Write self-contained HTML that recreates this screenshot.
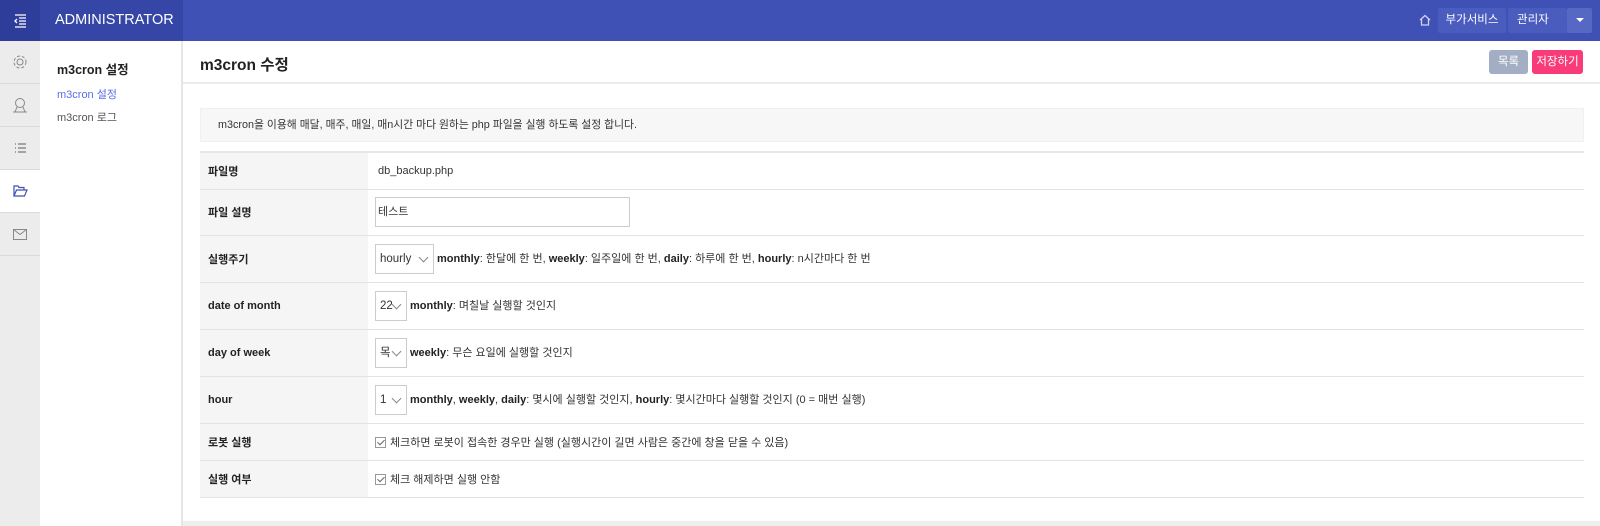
<!DOCTYPE html>
<html><head><meta charset="utf-8"><style>
*{box-sizing:border-box;margin:0;padding:0}
body{width:1600px;height:526px;overflow:hidden;background:#fff;font-family:"Liberation Sans","Noto Sans CJK KR",sans-serif;font-size:12px;color:#333;position:relative}
.top{position:absolute;left:0;top:0;width:1600px;height:41px;background:#3f51b5}
.tog{position:absolute;left:0;top:0;width:40px;height:41px;background:#2f3d9a}
.brand{position:absolute;left:40px;top:0;width:143px;height:41px;background:#3546a6;color:#fff;font-size:14.5px;line-height:41px;padding-left:15px}
.hb{position:absolute;top:8px;height:25px;background:#4a5cbe;color:#fff;font-size:11.5px;line-height:25px;text-align:center;border-radius:2px}
.side{position:absolute;left:0;top:41px;width:40px;height:485px;background:#ececec}
.si{position:absolute;left:0;width:40px;height:43px;border-bottom:1px solid #dadada}
.sub{position:absolute;left:40px;top:41px;width:143px;height:485px;border-right:2px solid #e6e6e6}
.main{position:absolute;left:183px;top:41px;right:0;height:485px}
table{border-collapse:collapse;position:absolute;left:17px;top:110px;width:1384px;border-top:2px solid #e6e6e6}
td{border-bottom:1px solid #e3e3e3;font-size:11px;vertical-align:middle}
td.l{background:#f5f5f5;width:168px;padding-left:8px;font-weight:bold;color:#222}
td.v{padding-left:7px}
.sel{display:inline-block;vertical-align:middle;border:1px solid #ccc;height:30px;line-height:28px;padding-left:4px;position:relative;margin-right:3px;background:#fff;font-size:11.5px}
.sel:after{content:"";position:absolute;right:6px;top:9px;width:6px;height:6px;border-right:1px solid #888;border-bottom:1px solid #888;transform:rotate(45deg)}
.cb{display:inline-block;width:11px;height:11px;border:1px solid #999;vertical-align:-2px;margin-right:4px;position:relative}
.cb:after{content:"";position:absolute;left:3px;top:0;width:3px;height:6px;border-right:1px solid #666;border-bottom:1px solid #666;transform:rotate(45deg)}
b{color:#222}
</style></head><body>
<div class="top"></div>
<div class="tog"><svg width="40" height="41" viewBox="0 0 40 41"><g stroke="#fff" stroke-width="1.3" fill="none"><path d="M15 15h11M19 18h7M19 21h7M19 24h7M15 27h11"/><path d="M17 19l-2 2 2 2"/></g></svg></div>
<div class="brand">ADMINISTRATOR</div>
<svg style="position:absolute;left:1418px;top:13px" width="14" height="14" viewBox="0 0 14 14"><path d="M2 7L7 2.5 12 7M3.5 6v6h7V6" fill="none" stroke="#cfd4f0" stroke-width="1.3"/></svg>
<div class="hb" style="left:1438px;width:68px">부가서비스</div>
<div class="hb" style="left:1508px;width:59px;text-align:left;padding-left:9px">관리자</div>
<div class="hb" style="left:1567px;width:25px;background:#5767c4"><span style="display:inline-block;border-left:4px solid transparent;border-right:4px solid transparent;border-top:4px solid #fff;vertical-align:middle"></span></div>
<div class="side">
<div class="si" style="top:0"><svg width="40" height="43"><circle cx="20" cy="21" r="3" fill="none" stroke="#888"/><circle cx="20" cy="21" r="6" fill="none" stroke="#888" stroke-dasharray="3 2"/></svg></div>
<div class="si" style="top:43px"><svg width="40" height="43"><circle cx="20" cy="19" r="4.5" fill="none" stroke="#888"/><path d="M13 28h14M17 23l-2 5M23 23l2 5" stroke="#888" fill="none"/></svg></div>
<div class="si" style="top:86px"><svg width="40" height="43"><g stroke="#777" stroke-width="1.2"><path d="M15 17h1M15 21h1M15 25h1M18 17h8M18 21h8M18 25h8"/></g></svg></div>
<div class="si" style="top:129px;background:#fff"><svg width="40" height="43"><path d="M14 26V16h4l1 1.5h5V20M14 26l2.5-6H27l-2.5 6z" fill="none" stroke="#3f51b5" stroke-width="1.2"/></svg></div>
<div class="si" style="top:172px"><svg width="40" height="43"><rect x="13.5" y="16.5" width="13" height="10" fill="none" stroke="#888"/><path d="M13.5 16.5l6.5 5 6.5-5" fill="none" stroke="#888"/></svg></div>
</div>
<div class="sub">
<div style="position:absolute;left:17px;top:18px;font-size:12.5px;font-weight:bold;color:#222">m3cron 설정</div>
<div style="position:absolute;left:17px;top:45px;color:#5a6ee6;font-size:11px">m3cron 설정</div>
<div style="position:absolute;left:17px;top:68px;color:#555;font-size:11px">m3cron 로그</div>
</div>
<div class="main">
<div style="position:absolute;left:17px;top:12px;font-size:15.5px;font-weight:bold;color:#222">m3cron 수정</div>
<div style="position:absolute;left:0;right:0;top:41px;border-top:2px solid #ececec"></div>
<div style="position:absolute;left:1306px;top:9px;width:39px;height:24px;background:#a3adc4;color:#fff;border-radius:3px;text-align:center;line-height:24px;font-size:11.5px">목록</div>
<div style="position:absolute;left:1349px;top:9px;width:51px;height:24px;background:#f93b7a;color:#fff;border-radius:3px;text-align:center;line-height:24px;font-size:11.5px">저장하기</div>
<div style="position:absolute;left:17px;top:67px;width:1384px;height:34px;background:#f7f7f7;border:1px solid #f0f0f0;line-height:32px;padding-left:17px;font-size:10.8px">m3cron을 이용해 매달, 매주, 매일, 매n시간 마다 원하는 php 파일을 실행 하도록 설정 합니다.</div>
<table>
<tr style="height:37px"><td class="l">파일명</td><td class="v" style="padding-left:10px">db_backup.php</td></tr>
<tr style="height:46px"><td class="l">파일 설명</td><td class="v"><div style="width:255px;height:30px;border:1px solid #ccc;line-height:28px;padding-left:2px">테스트</div></td></tr>
<tr style="height:47px"><td class="l">실행주기</td><td class="v"><span class="sel" style="width:59px">hourly</span><b>monthly</b>: 한달에 한 번, <b>weekly</b>: 일주일에 한 번, <b>daily</b>: 하루에 한 번, <b>hourly</b>: n시간마다 한 번</td></tr>
<tr style="height:47px"><td class="l">date of month</td><td class="v"><span class="sel" style="width:32px">22</span><b>monthly</b>: 며칠날 실행할 것인지</td></tr>
<tr style="height:47px"><td class="l">day of week</td><td class="v"><span class="sel" style="width:32px">목</span><b>weekly</b>: 무슨 요일에 실행할 것인지</td></tr>
<tr style="height:47px"><td class="l">hour</td><td class="v"><span class="sel" style="width:32px">1</span><b>monthly</b>, <b>weekly</b>, <b>daily</b>: 몇시에 실행할 것인지, <b>hourly</b>: 몇시간마다 실행할 것인지 (0 = 매번 실행)</td></tr>
<tr style="height:37px"><td class="l">로봇 실행</td><td class="v"><span class="cb"></span>체크하면 로봇이 접속한 경우만 실행 (실행시간이 길면 사람은 중간에 창을 닫을 수 있음)</td></tr>
<tr style="height:37px"><td class="l">실행 여부</td><td class="v"><span class="cb"></span>체크 해제하면 실행 안함</td></tr>
</table>
<div style="position:absolute;left:0;right:0;top:480px;height:5px;background:#efefef"></div>
</div>
</body></html>
